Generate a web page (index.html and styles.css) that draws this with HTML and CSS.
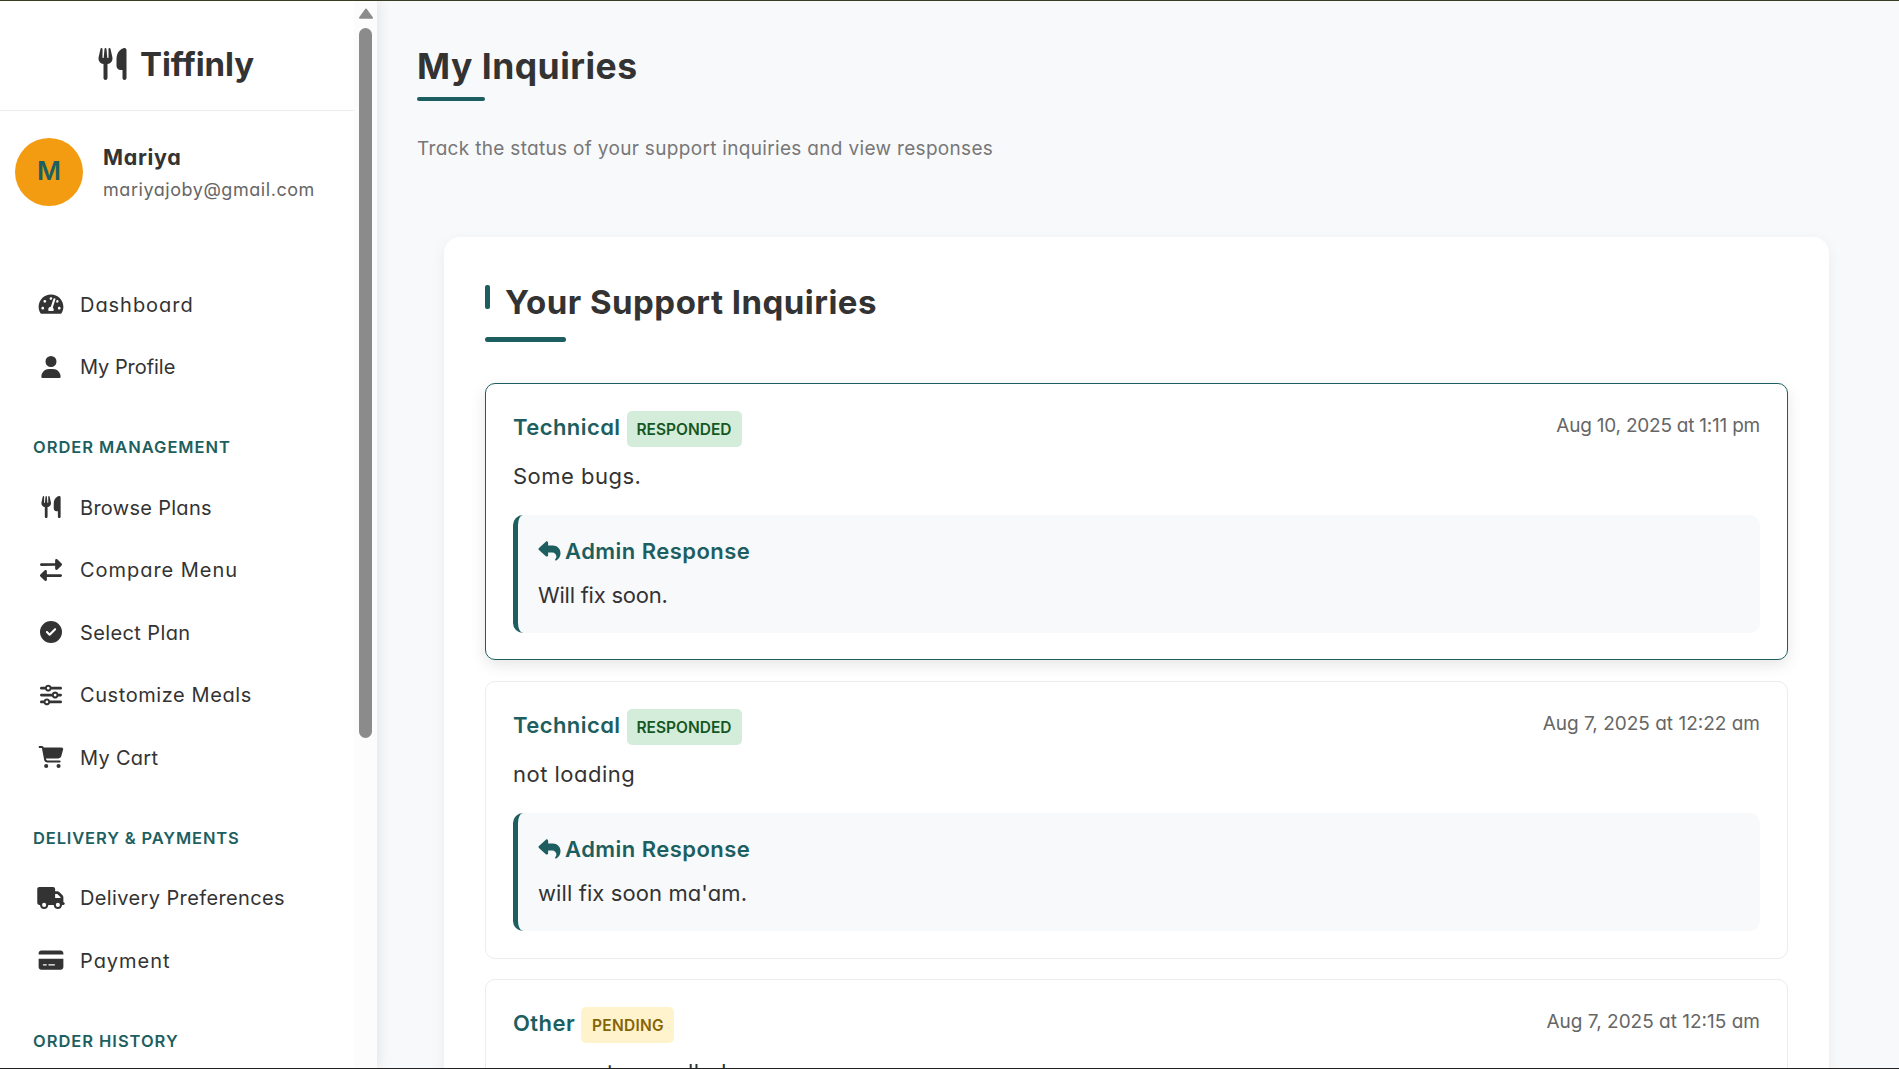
FILE: index.html
```html
<!DOCTYPE html>
<html lang="en">
<head>
<meta charset="utf-8">
<title>Tiffinly - My Inquiries</title>
<link rel="stylesheet" href="styles.css">
</head>
<body>
<svg class="sprite" aria-hidden="true">
  <symbol id="utensils" viewBox="0 0 448 512"><path d="M416 0C400 0 288 32 288 176V288c0 35.3 28.7 64 64 64h32V480c0 17.7 14.3 32 32 32s32-14.3 32-32V352 240 32c0-17.7-14.3-32-32-32zM64 16C64 7.8 57.9 1 49.7 .1S34.2 4.6 32.4 12.5L2.1 148.8C.7 155.1 0 161.5 0 167.9c0 45.9 35.1 83.6 80 87.7V480c0 17.7 14.3 32 32 32s32-14.3 32-32V255.6c44.9-4.1 80-41.8 80-87.7c0-6.4-.7-12.8-2.1-19.1L191.6 12.5c-1.8-8-9.3-13.3-17.4-12.4S160 7.8 160 16V150.2c0 5.4-4.4 9.8-9.8 9.8c-5.1 0-9.3-3.9-9.8-9L127.9 14.6C127.2 6.3 120.3 0 112 0s-15.2 6.3-15.9 14.6L83.7 151c-.5 5.1-4.7 9-9.8 9c-5.4 0-9.8-4.4-9.8-9.8V16z"/></symbol>
  <symbol id="gauge" viewBox="0 0 576 512"><path d="M288 32C128.94 32 0 160.94 0 320c0 52.8 14.25 102.26 39.06 144.8 5.61 9.62 16.3 15.2 27.44 15.2h443c11.14 0 21.83-5.58 27.44-15.2C561.75 422.26 576 372.8 576 320c0-159.06-128.94-288-288-288zm0 64c14.71 0 26.58 10.13 30.32 23.65-1.11 2.26-2.64 4.23-3.45 6.67l-9.22 27.67c-5.13 3.49-10.97 6.01-17.64 6.01-17.67 0-32-14.33-32-32S270.33 96 288 96zM96 384c-17.67 0-32-14.33-32-32s14.33-32 32-32 32 14.33 32 32-14.33 32-32 32zm48-160c-17.67 0-32-14.33-32-32s14.33-32 32-32 32 14.33 32 32-14.33 32-32 32zm246.77-72.41l-61.33 184C343.13 347.33 352 364.54 352 384c0 11.72-3.38 22.55-8.88 32H232.88c-5.5-9.45-8.88-20.28-8.88-32 0-33.94 26.5-61.43 59.9-63.59l61.34-184.01c4.17-12.56 17.73-19.45 30.36-15.17 12.57 4.19 19.35 17.79 15.17 30.36zm14.66 57.2l15.52-46.55c3.47-1.29 7.13-2.23 11.05-2.23 17.67 0 32 14.33 32 32s-14.33 32-32 32c-11.38-.01-20.89-6.28-26.57-15.22zM480 384c-17.67 0-32-14.33-32-32s14.33-32 32-32 32 14.33 32 32-14.33 32-32 32z"/></symbol>
  <symbol id="user" viewBox="0 0 448 512"><path d="M224 256A128 128 0 1 0 224 0a128 128 0 1 0 0 256zm-45.7 48C79.8 304 0 383.8 0 482.3C0 498.7 13.3 512 29.7 512H418.3c16.4 0 29.7-13.3 29.7-29.7C448 383.8 368.2 304 269.7 304H178.3z"/></symbol>
  <symbol id="exchange" viewBox="0 0 512 512"><path d="M32 96l320 0 0-64c0-12.9 7.8-24.6 19.8-29.6s25.7-2.2 34.9 6.9l96 96c6 6 9.4 14.1 9.4 22.6s-3.4 16.6-9.4 22.6l-96 96c-9.2 9.2-22.9 11.9-34.9 6.9s-19.8-16.6-19.8-29.6l0-64L32 160c-17.7 0-32-14.3-32-32s14.3-32 32-32zM480 352c17.7 0 32 14.3 32 32s-14.3 32-32 32l-320 0 0 64c0 12.9-7.8 24.6-19.8 29.6s-25.7 2.2-34.9-6.9l-96-96c-6-6-9.4-14.1-9.4-22.6s3.4-16.6 9.4-22.6l96-96c9.2-9.2 22.9-11.9 34.9-6.9s19.8 16.6 19.8 29.6l0 64 320 0z"/></symbol>
  <symbol id="check" viewBox="0 0 512 512"><path d="M256 512A256 256 0 1 0 256 0a256 256 0 1 0 0 512zM369 209L241 337c-9.4 9.4-24.6 9.4-33.9 0l-64-64c-9.4-9.4-9.4-24.6 0-33.9s24.6-9.4 33.9 0l47 47L335 175c9.4-9.4 24.6-9.4 33.9 0s9.4 24.6 0 33.9z"/></symbol>
  <symbol id="sliders" viewBox="0 0 512 512"><path d="M0 416c0 17.7 14.3 32 32 32l54.7 0c12.3 28.3 40.5 48 73.3 48s61-19.7 73.3-48L480 448c17.7 0 32-14.3 32-32s-14.3-32-32-32l-246.7 0c-12.3-28.3-40.5-48-73.3-48s-61 19.7-73.3 48L32 384c-17.7 0-32 14.3-32 32zm128 0a32 32 0 1 1 64 0 32 32 0 1 1 -64 0zM320 256a32 32 0 1 1 64 0 32 32 0 1 1 -64 0zm32-80c-32.8 0-61 19.7-73.3 48L32 224c-17.7 0-32 14.3-32 32s14.3 32 32 32l246.7 0c12.3 28.3 40.5 48 73.3 48s61-19.7 73.3-48l54.7 0c17.7 0 32-14.3 32-32s-14.3-32-32-32l-54.7 0c-12.3-28.3-40.5-48-73.3-48zM192 128a32 32 0 1 1 0-64 32 32 0 1 1 0 64zm73.3-64C253 35.7 224.8 16 192 16s-61 19.7-73.3 48L32 64C14.3 64 0 78.3 0 96s14.3 32 32 32l86.7 0c12.3 28.3 40.5 48 73.3 48s61-19.7 73.3-48L480 128c17.7 0 32-14.3 32-32s-14.3-32-32-32L265.3 64z"/></symbol>
  <symbol id="cart" viewBox="0 0 576 512"><path d="M0 24C0 10.7 10.7 0 24 0H69.5c22 0 41.5 12.8 50.6 32h411c26.3 0 45.5 25 38.6 50.4l-41 152.3c-8.5 31.4-37 53.3-69.5 53.3H170.7l5.4 28.5c2.2 11.3 12.1 19.5 23.6 19.5H488c13.3 0 24 10.7 24 24s-10.7 24-24 24H199.7c-34.6 0-64.3-24.6-70.7-58.5L77.4 54.5c-.7-3.8-4-6.5-7.9-6.5H24C10.7 48 0 37.3 0 24zM128 464a48 48 0 1 1 96 0 48 48 0 1 1 -96 0zm336-48a48 48 0 1 1 0 96 48 48 0 1 1 0-96z"/></symbol>
  <symbol id="truck" viewBox="0 0 640 512"><path d="M48 0C21.5 0 0 21.5 0 48V368c0 26.5 21.5 48 48 48H64c0 53 43 96 96 96s96-43 96-96H384c0 53 43 96 96 96s96-43 96-96h32c17.7 0 32-14.3 32-32s-14.3-32-32-32V288 256 237.3c0-17-6.7-33.3-18.7-45.3L512 114.7c-12-12-28.3-18.7-45.3-18.7H416V48c0-26.5-21.5-48-48-48H48zM416 160h50.7L544 237.3V256H416V160zM112 416a48 48 0 1 1 96 0 48 48 0 1 1 -96 0zm368-48a48 48 0 1 1 0 96 48 48 0 1 1 0-96z"/></symbol>
  <symbol id="card" viewBox="0 0 576 512"><path d="M64 32C28.7 32 0 60.7 0 96v32H576V96c0-35.3-28.7-64-64-64H64zM576 224H0V416c0 35.3 28.7 64 64 64H512c35.3 0 64-28.7 64-64V224zM112 352h64c8.8 0 16 7.2 16 16s-7.2 16-16 16H112c-8.8 0-16-7.2-16-16s7.2-16 16-16zm112 16c0-8.8 7.2-16 16-16H368c8.8 0 16 7.2 16 16s-7.2 16-16 16H240c-8.8 0-16-7.2-16-16z"/></symbol>
  <symbol id="reply" viewBox="0 0 512 512"><path d="M205 34.8c11.5 5.1 19 16.6 19 29.2v64H336c97.2 0 176 78.8 176 176c0 113.3-81.5 163.9-100.2 174.1c-2.5 1.4-5.3 1.9-8.1 1.9c-10.9 0-19.7-8.9-19.7-19.7c0-7.5 4.3-14.4 9.8-19.5c9.4-8.8 22.2-26.4 22.2-56.7c0-53-43-96-96-96H224v64c0 12.6-7.4 24.1-19 29.2s-25 3-34.4-5.4l-160-144C3.9 225.7 0 217.1 0 208s3.9-17.7 10.6-23.8l160-144c9.4-8.5 22.9-10.6 34.4-5.4z"/></symbol>
</svg>

<div class="app">
  <aside class="sidebar">
    <div class="sidebar-body">
      <div class="brand"><svg><use href="#utensils"/></svg><span>Tiffinly</span></div>
      <div class="profile">
        <div class="avatar">M</div>
        <div class="who">
          <div class="name">Mariya</div>
          <div class="email">mariyajoby@gmail.com</div>
        </div>
      </div>
      <nav>
        <a class="item wide"><svg><use href="#gauge"/></svg><span>Dashboard</span></a>
        <a class="item tight"><svg><use href="#user"/></svg><span>My Profile</span></a>
        <h4>ORDER MANAGEMENT</h4>
        <a class="item snug"><svg><use href="#utensils"/></svg><span>Browse Plans</span></a>
        <a class="item wide"><svg><use href="#exchange"/></svg><span>Compare Menu</span></a>
        <a class="item"><svg><use href="#check"/></svg><span>Select Plan</span></a>
        <a class="item mid"><svg><use href="#sliders"/></svg><span>Customize Meals</span></a>
        <a class="item snug"><svg><use href="#cart"/></svg><span>My Cart</span></a>
        <h4 class="narrow">DELIVERY &amp; PAYMENTS</h4>
        <a class="item"><svg><use href="#truck"/></svg><span>Delivery Preferences</span></a>
        <a class="item wide"><svg><use href="#card"/></svg><span>Payment</span></a>
        <h4>ORDER HISTORY</h4>
      </nav>
    </div>
    <div class="scrollbar">
      <svg class="arrow" viewBox="0 0 14 11"><path d="M7 1.5 L13 9.8 H1 Z"/></svg>
      <div class="thumb"></div>
    </div>
  </aside>

  <main>
    <h1>My Inquiries</h1>
    <p class="lead">Track the status of your support inquiries and view responses</p>
    <section class="panel">
      <h2>Your Support Inquiries</h2>
      <article class="inquiry active">
        <header>
          <span class="subject">Technical</span><span class="badge responded">RESPONDED</span>
          <time class="tight">Aug 10, 2025 at 1:11 pm</time>
        </header>
        <p class="message">Some bugs.</p>
        <div class="response">
          <h3><svg><use href="#reply"/></svg><span>Admin Response</span></h3>
          <p class="close">Will fix soon.</p>
        </div>
      </article>
      <article class="inquiry">
        <header>
          <span class="subject">Technical</span><span class="badge responded">RESPONDED</span>
          <time>Aug 7, 2025 at 12:22 am</time>
        </header>
        <p class="message">not loading</p>
        <div class="response">
          <h3><svg><use href="#reply"/></svg><span>Admin Response</span></h3>
          <p>will fix soon ma'am.</p>
        </div>
      </article>
      <article class="inquiry">
        <header>
          <span class="subject">Other</span><span class="badge pending">PENDING</span>
          <time>Aug 7, 2025 at 12:15 am</time>
        </header>
        <p class="message">menu not cancelled</p>
      </article>
    </section>
  </main>
</div>
</body>
</html>
```
FILE: styles.css
```css
* { box-sizing: border-box; margin: 0; padding: 0; }

body {
  height: 1069px;
  overflow: hidden;
  background: #f8f9fb;
  color: #333;
  font-family: Inter, "Open Sans", sans-serif;
  font-feature-settings: "cv11";
  border-top: 1px solid #3a3c25;
  border-bottom: 1px solid #222;
}

svg { display: block; fill: currentColor; flex: none; }
.sprite { width: 0; height: 0; position: absolute; }

.app { display: flex; height: 1067px; overflow: hidden; }

/* Sidebar */
.sidebar {
  display: flex;
  flex: none;
  width: 377px;
  height: 1067px;
  background: #fff;
  box-shadow: 2px 0 12px rgba(0, 0, 0, .09);
  z-index: 1;
}
.sidebar-body { width: 354px; overflow: hidden; }

.brand {
  display: flex;
  align-items: center;
  gap: 13px;
  height: 110px;
  padding: 17px 0 0 98px;
  border-bottom: 1px solid #ececec;
  font-size: 33px;
  font-weight: 700;
  line-height: 40px;
  letter-spacing: -.1px;
}
.brand svg { width: 29px; height: 32px; }

.profile { display: flex; gap: 20px; height: 162.4px; padding: 26.5px 0 0 15px; }
.avatar {
  width: 68px;
  height: 68px;
  border-radius: 50%;
  background: #f39c12;
  color: #1d5f60;
  font-size: 26px;
  font-weight: 600;
  line-height: 66px;
  text-align: center;
}
.name { margin-top: 2.5px; font-size: 21.5px; font-weight: 700; line-height: 34px; letter-spacing: .65px; }
.email { color: #666; font-size: 18px; line-height: 31px; letter-spacing: .55px; }

.item {
  display: grid;
  grid-template-columns: 60px 1fr;
  align-items: center;
  height: 62.5px;
  padding-left: 20px;
  font-size: 20px;
  line-height: 30px;
  letter-spacing: .38px;
}
.item svg { width: 28px; height: 22px; margin: -1px 0 0 16.5px; }
.item.wide { letter-spacing: .96px; }
.item.mid { letter-spacing: .58px; }
.item.snug { letter-spacing: .29px; }
.item.tight { letter-spacing: -.05px; }

nav h4 {
  height: 78px;
  padding: 37px 0 0 33px;
  color: #1d5f60;
  font-size: 16.5px;
  font-weight: 600;
  line-height: 24px;
  letter-spacing: .97px;
}
nav h4.narrow { letter-spacing: .86px; }

.scrollbar { width: 23px; background: #fcfcfc; padding: 6px 0 0 5px; }
.arrow { width: 14px; height: 13px; stroke: #8b8b8b; stroke-width: 2; stroke-linejoin: round; color: #8b8b8b; }
.thumb { width: 13px; height: 710px; margin-top: 8px; border-radius: 7px; background: #8b8b8b; }

/* Main column */
main { flex: 1; padding: 40px 70px 0 40px; }

h1 {
  height: 60px;
  margin-bottom: 32px;
  font-size: 35.5px;
  font-weight: 700;
  line-height: 52px;
  letter-spacing: .49px;
}
h1::after {
  content: "";
  display: block;
  width: 68px;
  height: 4px;
  margin-top: 4px;
  border-radius: 2px;
  background: #1d5f60;
}
.lead { color: #777; font-size: 19px; line-height: 32px; letter-spacing: .32px; }

.panel {
  height: 1000px;
  margin: 72px 0 0 27px;
  padding: 40px 41px;
  border-radius: 16px;
  background: #fff;
  box-shadow: 0 5px 15px rgba(0, 0, 0, .06);
}

h2 {
  display: grid;
  grid-template-columns: 20px 1fr;
  align-content: start;
  height: 106px;
  padding-top: 1px;
  font-size: 33px;
  font-weight: 700;
  line-height: 48px;
  letter-spacing: .48px;
}
h2::before {
  content: "";
  width: 5px;
  height: 24px;
  margin-top: 7px;
  border-radius: 2px;
  background: #1d5f60;
}
h2::after {
  content: "";
  grid-column: 1 / 3;
  width: 81px;
  height: 5px;
  margin-top: 11px;
  border-radius: 3px;
  background: #1d5f60;
}

.inquiry {
  height: 278px;
  margin-bottom: 20px;
  padding: 27px;
  border: 1px solid #ececec;
  border-radius: 10px;
}
.inquiry.active { height: 277px; margin-bottom: 21px; border-color: #1d5f60; box-shadow: 0 5px 15px rgba(0, 0, 0, .1); }

.inquiry header { display: flex; align-items: flex-start; height: 36px; }
.subject { color: #1d5f60; font-size: 22px; font-weight: 600; line-height: 32px; letter-spacing: .43px; }
.badge {
  height: 36px;
  margin-left: 6px;
  padding: 1px 10px 0;
  border-radius: 5px;
  font-size: 15.5px;
  font-weight: 600;
  line-height: 36px;
}
.responded { background: #d4edda; color: #155724; }
.pending { background: #fff3cd; color: #856404; letter-spacing: .25px; padding-left: 11px; }
time { margin-left: auto; color: #666; font-size: 19px; line-height: 30px; }
time.tight { letter-spacing: -.23px; }

.message { margin: 13px 0 23px; font-size: 22px; line-height: 32px; letter-spacing: .48px; }

.response {
  height: 118px;
  padding: 20px;
  border-left: 5px solid #1d5f60;
  border-radius: 10px;
  background: #f8f9fb;
}
.response h3 {
  display: flex;
  gap: 4px;
  margin-bottom: 12px;
  color: #1d5f60;
  font-size: 22px;
  font-weight: 600;
  line-height: 32px;
  letter-spacing: .46px;
}
.response svg { width: 23px; height: 22px; margin-top: 5px; }
.response p { font-size: 22px; line-height: 32px; letter-spacing: .1px; }
.response p.close { letter-spacing: -.23px; }
```
